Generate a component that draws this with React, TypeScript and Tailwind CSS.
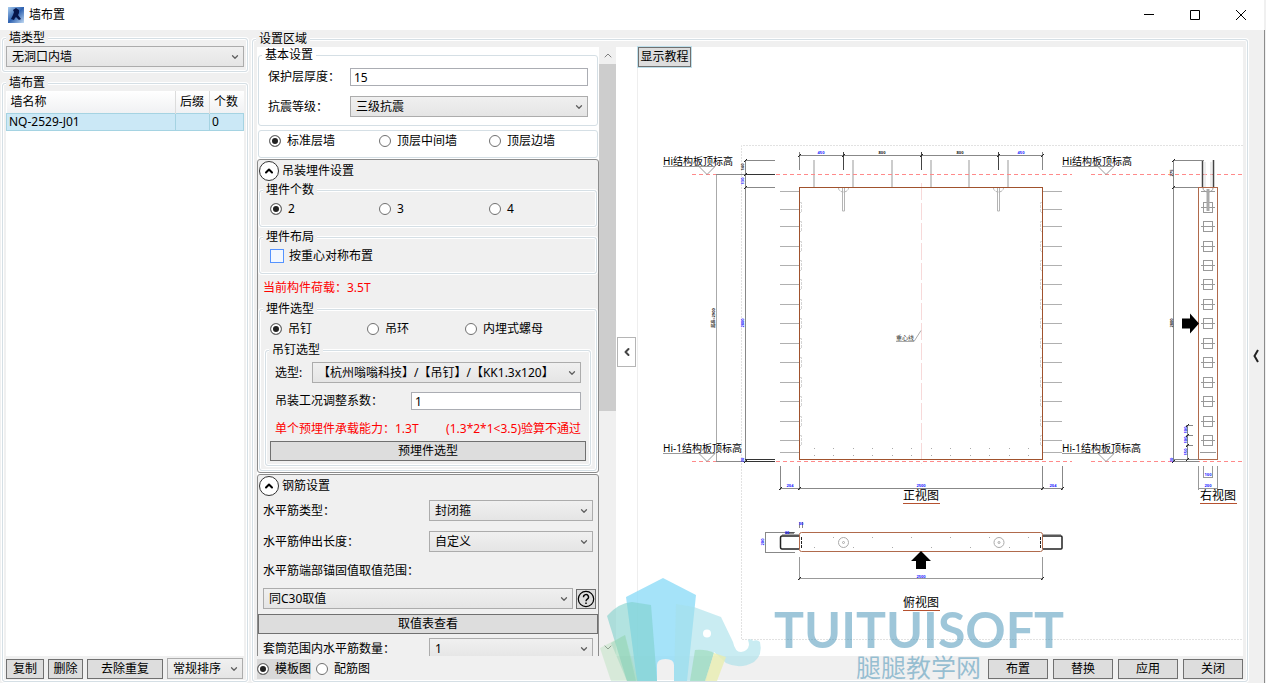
import React, { useState } from "react";
import { ChevronDown, ChevronLeft, ChevronUp } from "lucide-react";

interface GroupBoxProps {
  title: string;
  className?: string;
  legendClass?: string;
  children?: React.ReactNode;
}

interface RadioProps {
  name: string;
  label: string;
  className?: string;
  defaultChecked?: boolean;
}

interface SelectProps {
  id?: string;
  label?: string;
  options: string[];
  className?: string;
}

const GroupBox: React.FC<GroupBoxProps> = ({ title, className = "", legendClass = "bg-[#f0f0f0]", children }) => (
  <fieldset className={`min-w-0 rounded-[3px] border border-[#d5dfe5] shadow-[0_0_0_1px_#fff,inset_0_0_0_1px_#fff] ${className}`}>
    <legend className={`ml-[3px] h-4 px-[3px] leading-4 ${legendClass}`}>{title}</legend>
    {children}
  </fieldset>
);

const Radio: React.FC<RadioProps> = ({ name, label, className = "", defaultChecked }) => (
  <label className={`flex h-4 items-center gap-1.5 whitespace-nowrap ${className}`}>
    <input
      type="radio"
      name={name}
      defaultChecked={defaultChecked}
      className="size-3 shrink-0 appearance-none rounded-full border border-[#707070] bg-white checked:bg-[#212121] checked:shadow-[inset_0_0_0_2px_#fff]"
    />
    {label}
  </label>
);

const Select: React.FC<SelectProps> = ({ id, label, options, className = "" }) => (
  <div className={`relative h-[21px] ${className}`}>
    <select
      id={id}
      aria-label={label}
      className="h-full w-full appearance-none border border-[#acacac] bg-linear-to-b from-[#f0f0f0] to-[#e5e5e5] pr-4 pl-[5px] leading-4"
    >
      {options.map((o) => <option key={o}>{o}</option>)}
    </select>
    <ChevronDown className="pointer-events-none absolute top-1/2 right-1 size-2.5 -translate-y-1/2 text-[#606060]" strokeWidth={3} />
  </div>
);

const Button: React.FC<{ className?: string; children: React.ReactNode }> = ({ className = "", children }) => (
  <button type="button" className={`flex h-5 items-center justify-center border border-[#707070] bg-[#dddddd] whitespace-nowrap ${className}`}>
    {children}
  </button>
);

const Expander: React.FC<{ title: string; children: React.ReactNode }> = ({ title, children }) => (
  <section className="mt-px rounded-[3px] border border-[#8c8c8c] bg-[#f0f0f0]">
    <button type="button" className="ml-px flex h-[22px] items-center gap-[3px]">
      <span className="flex size-5 items-center justify-center rounded-full border border-[#333] bg-white">
        <ChevronUp className="size-3" strokeWidth={4} />
      </span>
      {title}
    </button>
    {children}
  </section>
);

const WALLS = [{ name: "NQ-2529-J01", suffix: "", count: 0 }];

const WallPanel: React.FC = () => (
  <aside className="flex w-[246px] shrink-0 flex-col gap-[3px]">
    <GroupBox title="墙类型">
      <Select label="墙类型" options={["无洞口内墙"]} className="mx-[3px] mb-1" />
    </GroupBox>
    <GroupBox title="墙布置" className="flex min-h-0 flex-1 flex-col">
      <div className="mx-[3px] min-h-0 flex-1 bg-white">
        <table className="w-full table-fixed border-collapse text-left">
          <thead>
            <tr className="h-[22px] bg-linear-to-b from-white to-[#f0f1f3]">
              <th className="border-r border-[#dcdcdc] px-1 font-normal">墙名称</th>
              <th className="w-[34px] border-r border-[#dcdcdc] px-1 font-normal">后缀</th>
              <th className="w-[34px] px-1 font-normal">个数</th>
            </tr>
          </thead>
          <tbody>
            {WALLS.map((w) => (
              <tr key={w.name} className="h-[17px] bg-[#cbe8f6] leading-4">
                <td className="border border-[#a5d3e2] px-[2px]">{w.name}</td>
                <td className="border border-[#a5d3e2]">{w.suffix}</td>
                <td className="border border-[#a5d3e2] px-[2px]">{w.count}</td>
              </tr>
            ))}
          </tbody>
        </table>
      </div>
      <div className="mx-[3px] flex h-[25px] items-center gap-1">
        <Button className="w-[38px]">复制</Button>
        <Button className="w-[35px]">删除</Button>
        <Button className="w-[76px]">去除重复</Button>
        <Select label="排序" options={["常规排序"]} className="w-[76px]" />
      </div>
    </GroupBox>
  </aside>
);

const HoistSettings: React.FC = () => (
  <Expander title="吊装埋件设置">
    <GroupBox title="埋件个数" className="mx-px">
      <div className="mt-[3px] mb-[9px] ml-2.5 flex">
        <Radio name="count" label="2" className="w-[109px]" defaultChecked />
        <Radio name="count" label="3" className="w-[110px]" />
        <Radio name="count" label="4" />
      </div>
    </GroupBox>
    <GroupBox title="埋件布局" className="mx-px mt-0.5">
      <label className="mt-[3px] mb-[9px] ml-2.5 flex h-4 items-center gap-[5px]">
        <input type="checkbox" className="size-3.5 appearance-none border border-[#5593ff] bg-[#f3f8ff] checked:bg-[#5593ff]" />
        按重心对称布置
      </label>
    </GroupBox>
    <p className="mt-1.5 ml-[5px] leading-4 text-[#ff0000]">当前构件荷载：3.5T</p>
    <GroupBox title="埋件选型" className="mx-px mt-[5px] mb-px">
      <div className="mt-1 mb-[5px] ml-2.5 flex">
        <Radio name="kind" label="吊钉" className="w-[97px]" defaultChecked />
        <Radio name="kind" label="吊环" className="w-[98px]" />
        <Radio name="kind" label="内埋式螺母" />
      </div>
      <GroupBox title="吊钉选型" className="mx-[5px] mb-1">
        <div className="mt-1 mr-[9px] ml-[9px] flex items-center">
          <label htmlFor="model" className="w-[37px]">选型:</label>
          <Select id="model" options={["【杭州嗡嗡科技】/【吊钉】/【KK1.3x120】"]} className="min-w-0 flex-1" />
        </div>
        <div className="mt-[9px] mr-[9px] ml-[9px] flex items-center">
          <label htmlFor="factor" className="flex-1">吊装工况调整系数：</label>
          <input id="factor" defaultValue="1" className="h-[18px] w-[170px] border border-[#abadb3] bg-white px-[3px]" />
        </div>
        <p className="mt-[11px] mr-[9px] ml-[9px] flex justify-between leading-4 whitespace-nowrap text-[#ff0000]">
          <span>单个预埋件承载能力：1.3T</span>
          <span>(1.3*2*1&lt;3.5)验算不通过</span>
        </p>
        <div className="mx-1 mt-1 mb-1">
          <Button className="w-full">预埋件选型</Button>
        </div>
      </GroupBox>
    </GroupBox>
  </Expander>
);

const RebarSettings: React.FC = () => (
  <Expander title="钢筋设置">
    <div className="mt-[3px] mr-[5px] ml-[5px] flex items-center">
      <label htmlFor="rebarType" className="flex-1">水平筋类型：</label>
      <Select id="rebarType" options={["封闭箍"]} className="w-[164px]" />
    </div>
    <div className="mt-2.5 mr-[5px] ml-[5px] flex items-center">
      <label htmlFor="rebarLen" className="flex-1">水平筋伸出长度：</label>
      <Select id="rebarLen" options={["自定义"]} className="w-[164px]" />
    </div>
    <label htmlFor="anchor" className="mt-[11px] ml-[5px] block leading-4">水平筋端部锚固值取值范围：</label>
    <div className="mt-[9px] mr-0.5 ml-[5px] flex items-center gap-[3px]">
      <Select id="anchor" options={["同C30取值"]} className="flex-1" />
      <button type="button" aria-label="帮助" className="flex size-5 items-center justify-center border border-[#707070] bg-[#dddddd]">
        <svg viewBox="0 0 18 18" className="size-[18px]" fill="none" stroke="#000">
          <circle cx="9" cy="9" r="7.7" strokeWidth="1.2" />
          <path d="M6.500 7.200a2.500 2.500 0 1 1 3.800 2c-1 .6-1.300 .9-1.300 2" strokeWidth="1.400" />
          <path d="M9 12.400v1.500" strokeWidth="1.500" />
        </svg>
      </button>
    </div>
    <Button className="mt-[5px] w-full">取值表查看</Button>
    <div className="mt-1 mr-[5px] ml-[5px] flex items-center">
      <label htmlFor="sleeve" className="flex-1">套筒范围内水平筋数量：</label>
      <Select id="sleeve" options={["1"]} className="w-[164px]" />
    </div>
  </Expander>
);

const SettingsColumn: React.FC = () => (
  <div className="flex h-full w-[359px] shrink-0">
    <div className="h-full w-[342px] overflow-hidden">
      <GroupBox title="基本设置" legendClass="bg-white" className="mx-px">
        <div className="mt-[5px] mr-[9px] ml-[9px] flex items-center">
          <label htmlFor="cover" className="w-[82px]">保护层厚度：</label>
          <input id="cover" defaultValue="15" className="h-[18px] min-w-0 flex-1 border border-[#abadb3] bg-white px-[3px]" />
        </div>
        <div className="mt-2.5 mr-[9px] mb-2 ml-[9px] flex items-center">
          <label htmlFor="quake" className="w-[82px]">抗震等级：</label>
          <Select id="quake" options={["三级抗震"]} className="min-w-0 flex-1" />
        </div>
      </GroupBox>
      <div className="mx-px mt-1 flex h-7 items-start rounded-[3px] border border-[#d5dfe5] pt-0.5 pl-2.5">
        <Radio name="floor" label="标准层墙" className="w-[110px]" defaultChecked />
        <Radio name="floor" label="顶层中间墙" className="w-[110px]" />
        <Radio name="floor" label="顶层边墙" />
      </div>
      <HoistSettings />
      <RebarSettings />
    </div>
    <div className="flex w-[17px] flex-col items-center bg-[#f0f0f0] text-[#808080]">
      <ChevronUp className="h-[17px] w-3" strokeWidth={2} />
      <div className="h-[347px] w-full bg-[#cdcdcd]" />
      <ChevronDown className="mt-auto h-[17px] w-3" strokeWidth={2} />
    </div>
  </div>
);

const BAR_ROWS = [191, 209, 226, 246, 265, 284, 304, 323, 343, 362, 382, 401, 421, 440];
const BOX_ROWS = [207, 226, 246, 265, 284, 304, 323, 343, 362, 382, 401, 421, 440];
const TOP_BARS = [814, 853, 892, 931, 969, 1008];
const BOTTOM_DOTS = [814, 833, 853, 872, 892, 911, 931, 950, 970, 989, 1009, 1028];

const Dim: React.FC<{ x: number; y: number; text: string; vertical?: boolean; dark?: boolean }> = ({ x, y, text, vertical, dark }) => (
  <text
    x={x}
    y={y}
    textAnchor="middle"
    transform={vertical ? `rotate(-90 ${x} ${y})` : undefined}
    className={`text-[4px] font-bold ${dark ? "fill-[#222]" : "fill-[#1a1aff]"}`}
  >
    {text}
  </text>
);

const LevelMark: React.FC<{ x: number; y: number; text: string }> = ({ x, y, text }) => (
  <g>
    <text x={x} y={y - 10} className="fill-black text-[10px]">{text}</text>
    <path d={`M${x} ${y - 8}h52`} stroke="#999" />
    <path d={`M${x + 36} ${y - 8}l8 8l8 -8`} stroke="#999" fill="none" />
  </g>
);

const ViewTitle: React.FC<{ x: number; y: number; text: string }> = ({ x, y, text }) => (
  <g>
    <text x={x} y={y} textAnchor="middle" className="fill-black text-[12px]">{text}</text>
    <path d={`M${x - 18} ${y + 3.5}h37`} stroke="#b5512f" />
  </g>
);

const Anchor: React.FC<{ x: number }> = ({ x }) => (
  <g fill="none" stroke="#b4b4b4">
    <path d={`M${x - 5} 188a5 4 0 0 0 10 0`} strokeDasharray="3 1" />
    <path d={`M${x - 1} 188v23h2v-23`} />
  </g>
);

const WallDrawing: React.FC = () => (
  <svg viewBox="637 47 606 609" className="h-full w-full" fill="none">
    <path d="M1243 145.5H741.5V639.5H1243" stroke="#e2e2e2" strokeDasharray="2 1" />

    {/* 正视图 */}
    <path d="M799.5 155.5H1042.5M799.5 152v18M1042.5 152v18" stroke="#888" />
    <path d="M843.5 152v18M921.5 152v18M998.5 152v18" stroke="#444" />
    {[799.5, 843.5, 921.5, 998.5, 1042.5].map((x) => <path key={x} d={`M${x - 1.5} 157l3 -3`} stroke="#222" />)}
    <Dim x={821} y={154} text="450" />
    <Dim x={882} y={154} text="800" dark />
    <Dim x={960} y={154} text="800" dark />
    <Dim x={1021} y={154} text="450" />
    {TOP_BARS.map((x) => <path key={x} d={`M${x} 160V187`} stroke="#ccc" strokeWidth="2" />)}
    <path d="M692 174.5H1072M1091 174.5H1243" stroke="#ff8a8a" strokeDasharray="4 3" />
    <path d="M692 461.5H1072M1091 461.5H1243" stroke="#ff8a8a" strokeDasharray="4 3" />

    <path d="M716.5 174.5V461.5" stroke="#aaa" />
    <path d="M745.5 160.5V461.5M745 160.5h30M745 187.5h30M716 174.5h30M716 461.5h30" stroke="#888" />
    <path d="M745 174.5h30M745 459.5h30M745 461.5h30" stroke="#333" />
    {[160.5, 174.5, 187.5, 461.5].map((y) => <path key={y} d={`M744 ${y + 1.5}l3 -3`} stroke="#222" />)}
    <Dim x={744} y={167} text="140" vertical dark />
    <Dim x={744} y={181} text="130" vertical />
    <Dim x={744} y={323} text="2800" vertical />
    <Dim x={744} y={460} text="20" vertical />
    <Dim x={715} y={318} text="层高=2900" vertical dark />

    {BAR_ROWS.map((y) => (
      <path key={y} d={`M780 ${y + 0.5}H799M1043 ${y + 0.5}h19`} stroke="#b0b0b0" />
    ))}
    {BOX_ROWS.map((y) => (
      <path key={y} d={`M800 ${y - 4.5}h1.5v10h-1.5M1042 ${y - 4.5}h-1.5v10h1.5`} stroke="#d4d4d4" strokeDasharray="3 1" />
    ))}
    <path d="M780 452.5H799M1043 452.5h19" stroke="#b0b0b0" />
    <path d="M921.5 183V464" stroke="#f7d9d9" strokeDasharray="17 3" />
    <rect x="799.5" y="187.5" width="243" height="272" stroke="#a0522d" />
    <Anchor x={843.5} />
    <Anchor x={998.5} />
    {BOTTOM_DOTS.map((x) => <path key={x} d={`M${x} 448.5h1M${x} 455.5h1`} stroke="#aaa" />)}
    <text x="896" y="340" className="fill-[#333] text-[6px]">重心线</text>
    <path d="M896 341.500h18l7 -11" stroke="#aaa" />

    <path d="M780 488.5H1062M780.5 466v24M799.5 466v24M1042.5 466v24M1062.5 466v24" stroke="#888" />
    {[780.5, 799.5, 1042.5, 1062.5].map((x) => <path key={x} d={`M${x - 1.5} 490l3 -3`} stroke="#222" />)}
    <Dim x={790} y={487} text="204" />
    <Dim x={921} y={487} text="2500" />
    <Dim x={1053} y={487} text="204" />
    <ViewTitle x={921} y={500} text="正视图" />

    <LevelMark x={663} y={174.5} text="Hi结构板顶标高" />
    <LevelMark x={1062} y={174.5} text="Hi结构板顶标高" />
    <LevelMark x={663} y={461.5} text="Hi-1结构板顶标高" />
    <LevelMark x={1062} y={461.5} text="Hi-1结构板顶标高" />

    {/* 俯视图 */}
    <path d="M799 536h-17q-1.500 0 -1.500 2v9q0 2 1.500 2h17M1043 536h18q1 0 1 1v11q0 1 -1 1h-18" stroke="#222" strokeWidth="1.500" />
    <path d="M782 534.5h17M1043 534.5h18" stroke="#aaa" />
    <path d="M801.5 537v11M1040.5 537v11" stroke="#222" strokeDasharray="3 1" />
    <rect x="799.5" y="532.5" width="243" height="19" rx="2" stroke="#b06a4c" />
    {[843.5, 999].map((x) => (
      <g key={x} stroke="#aaa">
        <circle cx={x} cy="542.5" r="5" />
        <circle cx={x} cy="542.5" r="1" />
      </g>
    ))}
    {BOTTOM_DOTS.map((x, i) => <path key={x} d={i % 2 ? `M${x} 537.5h1` : `M${x} 547.5h1`} stroke="#aaa" />)}
    <path d="M765.5 532V552M765 532.5h30M765 552.5h30M799.5 522v6M802.5 522v6" stroke="#888" />
    <path d="M785 533h9" stroke="#222" />
    <Dim x={764} y={542} text="200" vertical />
    <Dim x={801} y={525} text="30" />
    <Dim x={787} y={534} text="30" />
    <path d="M799.5 578.5H1042.5M799.5 557v23M1042.5 557v23" stroke="#999" />
    {[799.5, 1042.5].map((x) => <path key={x} d={`M${x - 1.5} 580l3 -3`} stroke="#222" />)}
    <Dim x={921} y={578} text="2500" />
    <path d="M921 551l10 10h-5v8h-10v-8h-5z" fill="#000" />
    <ViewTitle x={921} y={607} text="俯视图" />

    {/* 右视图 */}
    <path d="M1202.5 160V187M1213.5 160V187" stroke="#444" strokeWidth="1.500" />
    <path d="M1205 162v25M1211 162v25" stroke="#ddd" />
    <path d="M1173.5 160.5V461.5M1173 160.5h31M1173 187.5h26M1173 461.5h26M1173 459.5h26" stroke="#888" />
    {[160.5, 187.5, 461.5].map((y) => <path key={y} d={`M1172 ${y + 1.5}l3 -3`} stroke="#222" />)}
    <Dim x={1173} y={173} text="275" vertical dark />
    <Dim x={1173} y={323} text="2800" vertical dark />
    <Dim x={1173} y={460} text="20" vertical />
    {BOX_ROWS.map((y) => (
      <g key={y} stroke="#999">
        <rect x="1203.5" y={y - 4.5} width="9" height="10" />
        <path d={`M1201 ${y + 0.5}h14`} />
      </g>
    ))}
    <path d="M1201 191.5h14M1200 452.5h16" stroke="#999" />
    <path d="M1203 188a5 4 0 0 0 10 0" stroke="#999" />
    <path d="M1208 189V211" stroke="#aaa" strokeWidth="3" />
    <rect x="1198.5" y="187.5" width="19" height="272" stroke="#b06a4c" />
    <path d="M1182 318.500h8v-5l9 10l-9 10v-5h-8z" fill="#000" />
    <path d="M1187.5 425V460M1186 425.5h7M1186 435.5h7M1186 445.5h7" stroke="#888" />
    {[425.5, 435.5, 445.5, 459.5].map((y) => <path key={y} d={`M1186 ${y + 1.5}l3 -3`} stroke="#222" />)}
    <Dim x={1187} y={430} text="100" vertical />
    <Dim x={1187} y={440} text="100" vertical />
    <Dim x={1187} y={452} text="150" vertical />
    <path d="M1198.5 466v24M1217.5 466v24M1203.5 466v12M1212.5 466v12M1198 488.5h20M1203 477.5h10" stroke="#999" />
    <Dim x={1208} y={476} text="100" />
    <Dim x={1208} y={487} text="200" />
    <ViewTitle x={1218} y={500} text="右视图" />
  </svg>
);

const Watermark: React.FC = () => (
  <div className="pointer-events-none absolute bottom-0 left-[600px] flex h-[113px] items-end">
    <svg viewBox="600 570 170 113" className="h-[113px] w-[170px]">
      <path d="M626 597L663 578L696 595L687 681H674V665q0 -6 -8.500 -6t-8.500 6V681H637Z" fill="#8fdcf7" opacity=".8" />
      <path d="M607 616Q618 603 632 602L651 605L657 681H627Z" fill="#7fd0cc" opacity=".6" />
      <path d="M676 604L694 607L721 617L733 642Q735 652 741 652Q748 651 749 645Q749 643 748 640Q752 638 753 641Q757 639 760 642Q763 655 754 662Q740 670 726 663L714 652L706 681H674Z" fill="#a5dfe9" opacity=".6" />
      <circle cx="707" cy="633.500" r="4" fill="#fff" />
      <path d="M600 648L625 635L638 681H611Z" fill="#a8dcb0" opacity=".35" />
      <path d="M611 643L625 635L636 681H627Z" fill="#7cc9a8" opacity=".3" />
      <path d="M695 650Q706 649 714 653L705 681H690Z" fill="#8fd6a8" opacity=".5" />
      <path d="M714 653L726 657L717 681H705Z" fill="#e9edb0" opacity=".8" />
    </svg>
    <div className="h-full text-[#3d8db3]/50">
      <div className="mt-8 h-[54px] pl-1 font-['Lato',sans-serif] text-[50px] leading-[54px] font-bold whitespace-nowrap">TUITUISOFT</div>
      <div className="pl-[86px] font-['Liberation_Sans','Noto_Sans_CJK_SC',sans-serif] text-[25px] leading-[24px] whitespace-nowrap">腿腿教学网</div>
    </div>
  </div>
);

const App: React.FC = () => {
  const [collapsed, setCollapsed] = useState(false);

  return (
    <div className="relative flex h-screen flex-col overflow-hidden bg-[#f0f0f0] font-['Noto_Sans','Noto_Sans_CJK_SC',sans-serif] text-[12px] leading-4 text-black">
      <header className="mr-0.5 flex h-[30px] shrink-0 items-center bg-white pl-2">
        <svg viewBox="0 0 16 16" className="size-4">
          <defs>
            <linearGradient id="logo" x1="0" y1="0" x2="1" y2="1">
              <stop offset="0" stopColor="#a9cdf0" />
              <stop offset=".5" stopColor="#2f62b0" />
              <stop offset="1" stopColor="#c4dcf4" />
            </linearGradient>
          </defs>
          <rect width="16" height="16" fill="url(#logo)" />
          <path d="M5 3l3 -2l3 2v3l-1 2l3 4l-2 1l-3 -3l-1 1l-1 2l-3 -1l2 -4l1 -3z" fill="#06154a" />
        </svg>
        <h1 className="ml-[5px]">墙布置</h1>
        <div className="ml-auto flex h-full">
          <button type="button" aria-label="最小化" className="flex w-[46px] items-center justify-center">
            <svg viewBox="0 0 10 10" className="size-2.5" stroke="#000"><path d="M0 4.500h10" /></svg>
          </button>
          <button type="button" aria-label="最大化" className="flex w-[46px] items-center justify-center">
            <svg viewBox="0 0 10 10" className="size-2.5" fill="none" stroke="#000"><path d="M.5 .5h9v9h-9z" /></svg>
          </button>
          <button type="button" aria-label="关闭窗口" className="flex w-[46px] items-center justify-center">
            <svg viewBox="0 0 10 10" className="size-2.5" stroke="#000"><path d="M0 0l10 10M10 0l-10 10" /></svg>
          </button>
        </div>
      </header>

      <main className="mr-px flex min-h-0 flex-1 border-r border-[#8c8c8c] pb-px pl-[2px]">
        <WallPanel />
        <GroupBox title="设置区域" className="mt-px ml-1 flex flex-1 flex-col">
          <div className="mx-1 flex min-h-0 flex-1 bg-white">
            {!collapsed && <SettingsColumn />}
            <button
              type="button"
              aria-label="收起设置"
              onClick={() => setCollapsed(!collapsed)}
              className="my-auto mr-px ml-px flex h-[30px] w-[19px] shrink-0 items-center justify-center border border-[#b5b5b5] bg-white text-[#444]"
            >
              <ChevronLeft className="size-3" strokeWidth={4} />
            </button>
            <div className="relative min-w-0 flex-1 shadow-[inset_1px_0_0_#eee]">
              <WallDrawing />
              <Button className="absolute top-0 left-px w-[53px] outline outline-[#bfe0ec]">显示教程</Button>
            </div>
          </div>
          <div className="mx-1 flex h-[25px] shrink-0 items-center gap-[5px]">
            <Radio name="view" label="模板图" className="h-5 bg-[#d9d9d9]" defaultChecked />
            <Radio name="view" label="配筋图" className="h-5" />
            <Button className="ml-auto w-[60px]">布置</Button>
            <Button className="w-[60px]">替换</Button>
            <Button className="w-[60px]">应用</Button>
            <Button className="w-[60px]">关闭</Button>
          </div>
        </GroupBox>
        <button type="button" aria-label="展开侧栏" className="flex w-4 items-center justify-center">
          <svg viewBox="0 0 6 14" className="h-3.5 w-1.5" fill="none" stroke="#222" strokeWidth="2">
            <path d="M5 1L1.500 7L5 13" />
          </svg>
        </button>
      </main>
      <Watermark />
    </div>
  );
};

export default App;
